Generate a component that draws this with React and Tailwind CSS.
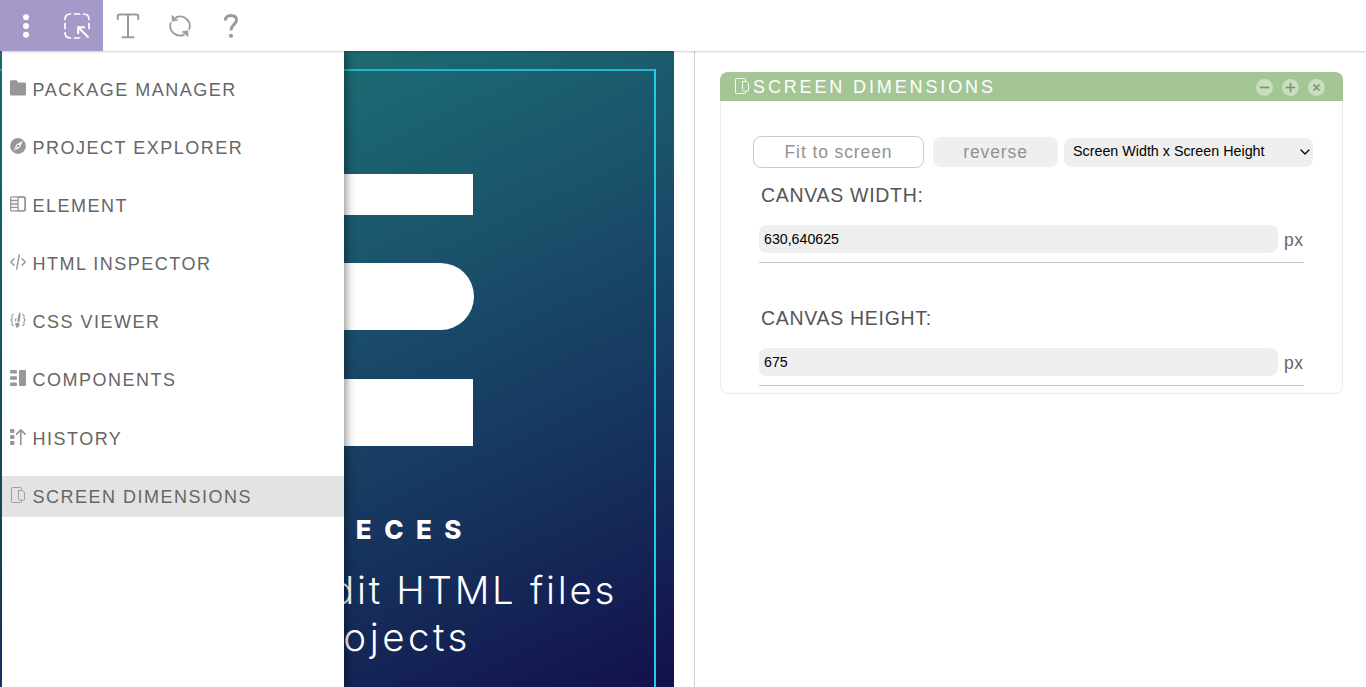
import React from "react";

const stroke = { fill: "none", stroke: "currentColor", strokeLinecap: "round", strokeLinejoin: "round" };

function ScreenIcon({ className = "w-4 h-4" }) {
  return (
    <svg viewBox="0 0 16 16" className={className} {...stroke} strokeWidth=".9">
      <path d="M11.500 3V1.500Q11.500.5 10.500.5H2.500Q1.500.5 1.500 1.500V14.500Q1.500 15.500 2.500 15.500H10.500Q11.500 15.500 11.500 14.500V13.400" />
      <path d="M8.500 3.500H12.600L14.500 5.300V12.200Q14.500 13.200 13.500 13.200H10.500Q8.500 13.200 8.500 11.500V3.500" />
    </svg>
  );
}

const icons = {
  folder: (
    <svg viewBox="0 0 16 16" className="w-4 h-4" fill="currentColor">
      <path d="M0 1.600Q0 .2 1.400.2H6Q7 .2 7.400 1.200L8 2.500H14.600Q16 2.500 16 3.900V14.200Q16 15.600 14.600 15.600H1.400Q0 15.600 0 14.200Z" />
    </svg>
  ),
  compass: (
    <svg viewBox="0 0 16 16" className="w-4 h-4">
      <circle cx="8" cy="8" r="7.900" fill="currentColor" />
      <path d="M13 2.800L9.800 9.500L3 13.200L6.500 6.500Z" fill="white" />
      <circle cx="8.200" cy="7.900" r="1.200" fill="currentColor" />
      <path d="M8 8L3 13.200" stroke="currentColor" strokeWidth=".7" />
    </svg>
  ),
  element: (
    <svg viewBox="0 0 16 16" className="w-4 h-4" {...stroke} strokeWidth="1.300">
      <rect x=".7" y=".9" width="14.600" height="14" rx="1.200" />
      <path d="M8 1V15M8 2.800Q8 1.200 10 1.200H13Q15 1.200 15 3.500V12.500Q15 14.800 13 14.800H10Q8 14.800 8 13M1 4.500H7.500M1 8H7.500M1 11.400H7.500" />
    </svg>
  ),
  code: (
    <svg viewBox="0 0 16 16" className="w-4 h-4" {...stroke} strokeWidth="1.400">
      <path d="M4 4.700L.7 8L4 11.300M12 4.700L15.300 8L12 11.300M9.300 1L6.700 15" />
    </svg>
  ),
  css: (
    <svg viewBox="0 0 16 16" className="w-4 h-4" {...stroke} strokeWidth="1.100">
      <path d="M3.500 2.500Q2 2.300 2 4.300V6.200Q2 7.800.6 8Q2 8.200 2 9.800V11.700Q2 13.600 3.500 13.500M12.500 2.500Q14 2.300 14 4.300V6.200Q14 7.800 15.400 8Q14 8.200 14 9.800V11.700Q14 13.600 12.500 13.500" />
      <path d="M9.900.7Q8 4 8 9L9 9.500Q10.300 4 9.900.7Z" fill="currentColor" />
      <path d="M7.600 11Q6 11.200 5.700 12.500Q6.500 14 7 15.200Q9 14.300 9 12.500Q9 11 7.600 11ZM6 6.500Q5.400 7.500 5.600 9" fill="currentColor" />
    </svg>
  ),
  components: (
    <svg viewBox="0 0 16 16" className="w-4 h-4" fill="currentColor">
      <rect x="0" y="0" width="7" height="3.600" rx="1" />
      <rect x="0" y="6.200" width="7" height="3.600" rx="1" />
      <rect x="0" y="12.400" width="7" height="3.600" rx="1" />
      <rect x="9" y="0" width="7" height="16" rx="1.200" />
    </svg>
  ),
  history: (
    <svg viewBox="0 0 16 16" className="w-4 h-4">
      <rect x="0" y="0" width="4.400" height="4" rx=".7" fill="currentColor" />
      <rect x="0" y="6" width="4.400" height="4" rx=".7" fill="currentColor" />
      <rect x="0" y="12" width="4.400" height="4" rx=".7" fill="currentColor" />
      <path d="M10.800 15.500V1M6.600 5.200L10.800.8L15 5.200" {...stroke} strokeWidth="1.700" />
    </svg>
  ),
  screen: <ScreenIcon />,
};

const menu = [
  ["folder", "PACKAGE MANAGER"],
  ["compass", "PROJECT EXPLORER"],
  ["element", "ELEMENT"],
  ["code", "HTML INSPECTOR"],
  ["css", "CSS VIEWER"],
  ["components", "COMPONENTS"],
  ["history", "HISTORY"],
  ["screen", "SCREEN DIMENSIONS"],
];

function Toolbar() {
  return (
    <header className="relative z-20 flex h-[51px] shrink-0 bg-white text-[#9b9b9b] shadow-[0_1px_2px_rgba(0,0,0,0.2)]">
      <div className="flex bg-[#a499c8] text-white">
        <button className="flex w-[51px] items-center justify-center">
          <svg viewBox="0 0 8 24" className="h-6 w-2" fill="currentColor">
            <circle cx="4" cy="3.300" r="3" />
            <circle cx="4" cy="12" r="3" />
            <circle cx="4" cy="20.700" r="3" />
          </svg>
        </button>
        <button className="flex w-[51.500px] items-center justify-center">
          <svg viewBox="0 0 26 26" className="h-[26px] w-[26px]" {...stroke} strokeWidth="1.700">
            <path d="M1 6.500Q1 1 6.500 1M10.500 1H15.500M19.500 1Q25 1 25 6.500M25 10.500V15.500M1 10.500V15.500M1 19.500Q1 25 6.500 25M10.500 25H15.500" />
            <path d="M24.500 24.500L14.500 14.500M14.200 21V14.200H21" strokeLinecap="butt" strokeLinejoin="miter" strokeWidth="2" />
          </svg>
        </button>
      </div>
      <button className="flex w-[51px] items-center justify-center">
        <svg viewBox="0 0 24 26" className="h-[26px] w-6" {...stroke} strokeWidth="2">
          <path d="M1.800 6V3Q1.800 1.500 3.500 1.500H20.500Q22.200 1.500 22.200 3V6M12 1.500V24M6.500 24.300H17.500" />
        </svg>
      </button>
      <button className="flex w-[52px] items-center justify-center">
        <svg viewBox="0 0 24 24" className="h-6 w-6" {...stroke} strokeWidth="1.800">
          <path d="M8.300 3.200A9.700 9.700 0 0 1 21.300 15M15.700 20.800A9.700 9.700 0 0 1 2.700 9" />
          <path d="M4 1.800L4.200 7.300L9.500 6.200ZM20 22.200L19.800 16.700L14.500 17.800Z" fill="currentColor" strokeWidth=".8" />
        </svg>
      </button>
      <button className="flex w-[51px] items-center justify-center">
        <svg viewBox="0 0 16 26" className="h-[26px] w-4" {...stroke} strokeWidth="3" strokeLinecap="butt">
          <path d="M2.400 7.500Q2.400 2.400 8 2.400Q13.500 2.400 13.500 7Q13.500 9.500 10.500 12Q8 14.300 8 17.500" />
          <circle cx="8" cy="22.800" r="2.100" fill="currentColor" stroke="none" />
        </svg>
      </button>
    </header>
  );
}

function Menu() {
  return (
    <nav className="absolute inset-y-0 left-[2px] z-10 flex w-[342px] flex-col gap-[17.200px] bg-white pt-[17.500px] shadow-[2px_0_9px_rgba(0,0,0,0.45)]">
      {menu.map(([icon, label]) => (
        <a
          key={label}
          className={`flex h-[41px] shrink-0 items-center gap-[7px] pl-[7.500px] text-[18px] tracking-[1.500px] text-[#666] ${icon === "screen" ? "bg-[#e3e3e3]" : ""}`}
        >
          <span className="mb-[3px] text-[#979797]">{icons[icon]}</span>
          <span className="pt-[2px] whitespace-nowrap">{label}</span>
        </a>
      ))}
    </nav>
  );
}

function Canvas() {
  return (
    <section className="relative w-[673.500px] shrink-0 overflow-hidden bg-[linear-gradient(155deg,#1d7876_0%,#1b6570_24%,#1a526b_43%,#16345e_70%,#130f4a_101%)] pt-[18px] pr-[17.500px]">
      <div className="flex h-[700px] flex-col border-t-2 border-r-2 border-t-[#25b5cf] border-r-[#1bd0e2] pl-[100px] text-right text-white">
        <div className="mt-[103px] h-[41px] w-[373px] bg-white" />
        <div className="mt-[48px] h-[67px] w-[373.500px] rounded-r-full bg-white" />
        <div className="mt-[49px] h-[67px] w-[373px] bg-white" />
        <p className="mt-[68px] pr-[180px] font-['Inter',sans-serif] text-[26px] leading-[32px] font-extrabold tracking-[12.500px]">PIECES</p>
        <div className="mt-[19.500px] font-['Inter',sans-serif] text-[38.500px] leading-[48px] font-light whitespace-nowrap">
          <p className="pr-[37px] tracking-[2.700px]">edit HTML files</p>
          <p className="-mt-px pr-[183px] tracking-[3.500px]">projects</p>
        </div>
      </div>
    </section>
  );
}

function Field({ label, value }) {
  return (
    <div className="pl-[38px]">
      <label className="block pl-[2px] text-[19.500px] leading-6 tracking-[0.700px] text-[#555]">{label}</label>
      <div className="mt-[18px] flex h-[38px] w-[545px] gap-[6px] border-b border-[#c6c6c6]">
        <div className="h-7 w-[519px] rounded-[8px] bg-[#efefef] pl-[5px] text-[14.200px] leading-[28px] text-black">{value}</div>
        <span className="text-[17.500px] leading-[30px] tracking-[0.500px] text-[#666]">px</span>
      </div>
    </div>
  );
}

function RoundButton({ d }) {
  return (
    <button className="flex h-[17px] w-[17px] items-center justify-center rounded-full bg-[#c8dfbf] text-[#7e8f78]">
      <svg viewBox="0 0 17 17" className="h-[17px] w-[17px]" {...stroke} strokeWidth="1.700" strokeLinecap="butt">
        <path d={d} />
      </svg>
    </button>
  );
}

function Panel() {
  return (
    <div className="h-[322px] w-[623px] rounded-[8px] border border-t-0 border-[#ececec] bg-white">
      <div className="-mx-px flex h-[28.500px] items-center rounded-t-[8px] bg-[#a4c694] pr-[18px] pl-[14px] text-white">
        <ScreenIcon className="h-4 w-4" />
        <h2 className="ml-[3px] flex-1 pt-[2px] text-[18px] leading-none tracking-[2.870px]">SCREEN DIMENSIONS</h2>
        <div className="flex gap-[9px] pt-[3px]">
          <RoundButton d="M3.800 8.500H13.200" />
          <RoundButton d="M3.800 8.500H13.200M8.500 3.800V13.200" />
          <RoundButton d="M5.500 5.500L11.500 11.500M11.500 5.500L5.500 11.500" />
        </div>
      </div>
      <div className="mt-[35.500px] flex h-[32px] w-full items-center pl-[32px]">
        <button className="h-[32px] w-[171px] rounded-[8px] border border-[#cacaca] bg-white text-[17.500px] tracking-[0.900px] text-[#929292]">Fit to screen</button>
        <button className="ml-[9px] h-[30px] w-[125px] rounded-[8px] bg-[#efefef] text-[17.500px] leading-[30px] tracking-[0.900px] text-[#929292]">reverse</button>
        <button className="ml-[6px] flex h-[29px] w-[249px] items-center justify-between rounded-[8px] bg-[#efefef] pr-[3px] pl-[9px] text-[14.300px] text-black">
          <span className="whitespace-nowrap">Screen Width x Screen Height</span>
          <svg viewBox="0 0 10 6" className="h-[6px] w-[10px]" {...stroke} strokeWidth="1.300">
            <path d="M1 1L5 5L9 1" />
          </svg>
        </button>
      </div>
      <div className="mt-[15px] flex flex-col gap-[43px]">
        <Field label="CANVAS WIDTH:" value="630,640625" />
        <Field label="CANVAS HEIGHT:" value="675" />
      </div>
    </div>
  );
}

export default function App() {
  return (
    <div className="flex h-[687px] w-[1366px] flex-col overflow-hidden bg-white font-['Liberation_Sans',Arial,sans-serif]">
      <Toolbar />
      <main className="relative flex min-h-0 flex-1 overflow-hidden">
        <Menu />
        <Canvas />
        <section className="ml-[20.500px] flex-1 border-l border-[#cfcfcf] pt-[21px] pl-[25px]">
          <Panel />
        </section>
      </main>
    </div>
  );
}
